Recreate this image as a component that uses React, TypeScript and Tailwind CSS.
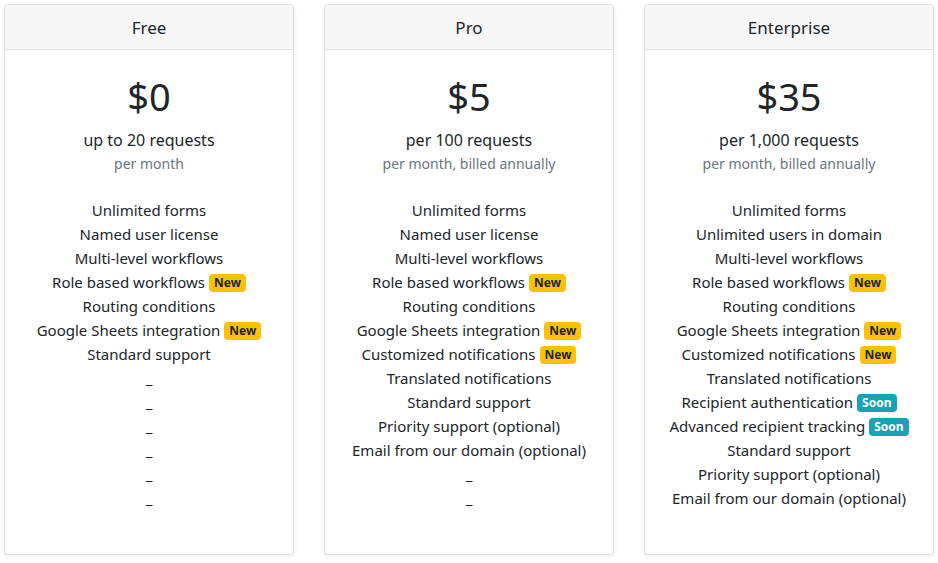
import React from 'react';

type Feature = { label: string; badge?: 'New' | 'Soon' };

const plans: { name: string; price: string; unit: string; note: string; features: (Feature | null)[] }[] = [
  {
    name: 'Free',
    price: '$0',
    unit: 'up to 20 requests',
    note: 'per month',
    features: [
      { label: 'Unlimited forms' },
      { label: 'Named user license' },
      { label: 'Multi-level workflows' },
      { label: 'Role based workflows', badge: 'New' },
      { label: 'Routing conditions' },
      { label: 'Google Sheets integration', badge: 'New' },
      { label: 'Standard support' },
      null,
      null,
      null,
      null,
      null,
      null
    ]
  },
  {
    name: 'Pro',
    price: '$5',
    unit: 'per 100 requests',
    note: 'per month, billed annually',
    features: [
      { label: 'Unlimited forms' },
      { label: 'Named user license' },
      { label: 'Multi-level workflows' },
      { label: 'Role based workflows', badge: 'New' },
      { label: 'Routing conditions' },
      { label: 'Google Sheets integration', badge: 'New' },
      { label: 'Customized notifications', badge: 'New' },
      { label: 'Translated notifications' },
      { label: 'Standard support' },
      { label: 'Priority support (optional)' },
      { label: 'Email from our domain (optional)' },
      null,
      null
    ]
  },
  {
    name: 'Enterprise',
    price: '$35',
    unit: 'per 1,000 requests',
    note: 'per month, billed annually',
    features: [
      { label: 'Unlimited forms' },
      { label: 'Unlimited users in domain' },
      { label: 'Multi-level workflows' },
      { label: 'Role based workflows', badge: 'New' },
      { label: 'Routing conditions' },
      { label: 'Google Sheets integration', badge: 'New' },
      { label: 'Customized notifications', badge: 'New' },
      { label: 'Translated notifications' },
      { label: 'Recipient authentication', badge: 'Soon' },
      { label: 'Advanced recipient tracking', badge: 'Soon' },
      { label: 'Standard support' },
      { label: 'Priority support (optional)' },
      { label: 'Email from our domain (optional)' }
    ]
  }
];

function Badge({ kind }: { kind: 'New' | 'Soon' }) {
  if (kind === 'New') {
    return (
      <span className="ml-1 inline-flex h-[18px] items-center rounded-[4px] bg-[#ffc107] px-[5px] align-[1px] text-[12px] font-bold leading-none text-[#212529]">
        New
      </span>
    );
  }
  return (
    <span className="ml-1 inline-flex h-[18px] items-center rounded-[4px] bg-[#17a2b8] px-[5px] align-[1px] text-[12px] font-bold leading-none text-white">
      Soon
    </span>
  );
}

function PlanCard({ plan }: { plan: (typeof plans)[number] }) {
  return (
    <div className="flex flex-col rounded-[4px] border border-[#dfdfdf] bg-white shadow-[0_2px_4px_rgba(0,0,0,0.075)]">
      <div className="flex h-[45px] items-center justify-center rounded-t-[3px] border-b border-[#dfdfdf] bg-[#f7f7f7] pt-[1px] text-[17px] text-[#212529]">
        {plan.name}
      </div>
      <div className="flex flex-col items-center pb-[44px] pt-[22px] text-center text-[#212529]">
        <div className="text-[38px] leading-[48px]">{plan.price}</div>
        <div className="mt-[8px] text-[16px] leading-[24px]">{plan.unit}</div>
        <div className="text-[14px] leading-[24px] text-[#6c757d]">{plan.note}</div>
        <ul className="mt-[22px] text-[15px] leading-[24px]">
          {plan.features.map((f, i) => (
            <li key={i} className="h-[24px]">
              {f ? (
                <>
                  {f.label}
                  {f.badge && <Badge kind={f.badge} />}
                </>
              ) : (
                '_'
              )}
            </li>
          ))}
        </ul>
      </div>
    </div>
  );
}

export default function App() {
  return (
    <div className="min-h-screen bg-white px-1 pt-1 font-['Noto_Sans',sans-serif]">
      <div className="grid grid-cols-3 gap-[30px]">
        {plans.map(p => (
          <PlanCard key={p.name} plan={p} />
        ))}
      </div>
    </div>
  );
}
